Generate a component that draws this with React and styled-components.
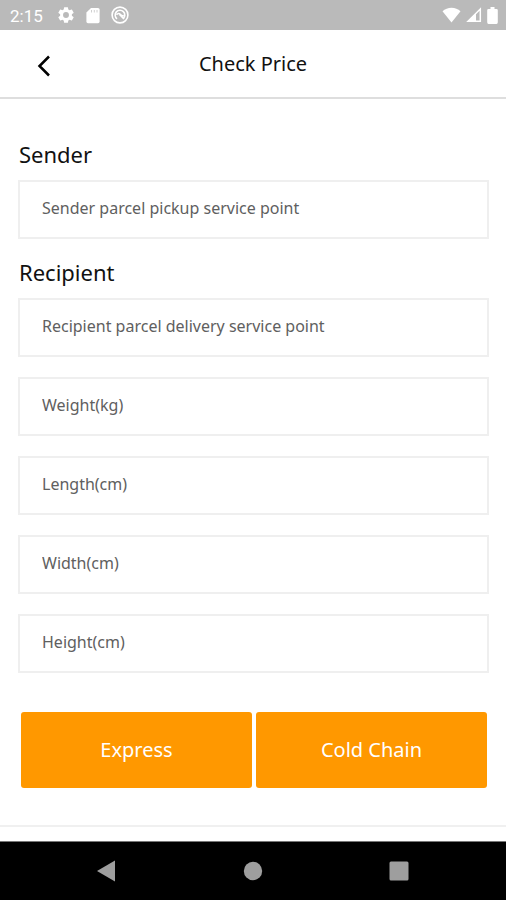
import React from "react";
import styled, { createGlobalStyle } from "styled-components";

const GlobalStyle = createGlobalStyle`
  * { box-sizing: border-box; }
  body { margin: 0; background: #fff; }
  body, button, input { font-family: "Noto Sans", "Open Sans", sans-serif; }
`;

const Screen = styled.div`
  display: flex;
  flex-direction: column;
  min-height: 100vh;
  background: #fff;
  color: #111;
`;

const StatusBar = styled.div`
  display: flex;
  align-items: center;
  justify-content: space-between;
  height: 30px;
  padding: 0 8px 0 10px;
  background: #bababa;
  color: #fff;
  font: 400 17px/30px Roboto, sans-serif;
`;

const StatusGroup = styled.div`
  display: flex;
  align-items: center;
  gap: ${(p) => p.$gap}px;
`;

const Time = styled.span`
  margin-right: 3px;
  padding-top: 2px;
`;

const Header = styled.header`
  display: grid;
  grid-template-columns: 64px 1fr 64px;
  align-items: center;
  height: 69px;
  border-bottom: 2px solid #dedede;
`;

const BackButton = styled.button`
  display: flex;
  justify-content: flex-end;
  padding: 4px 13px 0 0;
  border: 0;
  background: none;
  color: #000;
`;

const Title = styled.h1`
  margin: 0;
  font-size: 20px;
  line-height: 28px;
  font-weight: 400;
  text-align: center;
`;

const Form = styled.form`
  display: flex;
  flex-direction: column;
  flex: 1;
  padding: 42px 17px 37px 18px;
  border-bottom: 2px solid #f0f0f0;
`;

const Field = styled.div`
  display: flex;
  flex-direction: column;
  margin-bottom: 20px;
`;

const Label = styled.label`
  padding-left: 1px;
  margin-bottom: 13px;
  font-size: 22px;
  line-height: 26px;
`;

const Input = styled.input`
  width: 100%;
  height: 59px;
  padding: 0 22px 4px;
  border: 2px solid #efefef;
  border-radius: 0;
  background: #fff;
  color: #333;
  font-size: 16px;
  outline: none;
  &::placeholder { color: #606060; opacity: 1; }
`;

const Actions = styled.div`
  display: flex;
  gap: 4px;
  padding: 19px 2px 0 3px;
`;

const ActionButton = styled.button`
  flex: 1;
  height: 76px;
  padding: 0 0 2px;
  border: 0;
  border-radius: 3px;
  background: #ff9800;
  color: #fff;
  font-size: 20px;
`;

const Gap = styled.div`
  height: 14px;
`;

const NavBar = styled.nav`
  display: flex;
  justify-content: center;
  gap: 118px;
  height: 59px;
  border-top: 1px solid #777;
  background: #000;
`;

const NavButton = styled.button`
  display: flex;
  align-items: center;
  justify-content: center;
  width: 28px;
  padding: 0;
  border: 0;
  background: none;
  color: #9e9e9e;
`;

const GearIcon = () => (
  <svg width="18" height="18" viewBox="1 1 22 22" fill="currentColor" aria-hidden="true">
    <path d="M19.14 12.94c.04-.3.06-.61.06-.94s-.02-.64-.07-.94l2.03-1.58a.5.5 0 0 0 .12-.61l-1.92-3.32a.5.5 0 0 0-.59-.22l-2.39.96a7 7 0 0 0-1.62-.94l-.36-2.54a.48.48 0 0 0-.48-.41h-3.84a.48.48 0 0 0-.47.41l-.36 2.54c-.59.24-1.13.57-1.62.94l-2.39-.96a.48.48 0 0 0-.59.22L2.74 8.87a.48.48 0 0 0 .12.61l2.03 1.58a6 6 0 0 0 0 1.88l-2.03 1.58a.5.5 0 0 0-.12.61l1.92 3.32c.12.22.37.29.59.22l2.39-.96c.5.38 1.03.7 1.62.94l.36 2.54c.05.24.24.41.48.41h3.84c.24 0 .44-.17.47-.41l.36-2.54a7 7 0 0 0 1.62-.94l2.39.96c.22.08.47 0 .59-.22l1.92-3.32a.48.48 0 0 0-.12-.61zM12 15.6a3.6 3.6 0 1 1 0-7.2 3.6 3.6 0 0 1 0 7.2z" />
  </svg>
);

const CardIcon = () => (
  <svg width="14" height="17" viewBox="0 0 14 17" aria-hidden="true">
    <path d="M5 1h7a1.6 1.6 0 0 1 1.6 1.6v12A1.6 1.6 0 0 1 12 16.200H2A1.600 1.600 0 0 1 .4 14.600V5.600z" fill="currentColor" />
    <path d="M5.500 3v2.500M8.300 3v2.500M11 3v2.500" stroke="#d0d0d0" strokeWidth="1" />
  </svg>
);

const CircleIcon = () => (
  <svg width="18" height="18" viewBox="0 0 18 18" fill="none" stroke="currentColor" aria-hidden="true">
    <circle cx="9" cy="9" r="7.900" strokeWidth="1.600" />
    <path d="M6 12.800a4.800 4.800 0 1 1 6.200-.2" strokeWidth="1.600" />
    <path d="M5.500 8.800c1.500-1.800 2.800-1.500 4-.3s2 1.700 3.300 1M8.500 8.500l4.500 4.500" strokeWidth="1.600" />
  </svg>
);

const WifiIcon = () => (
  <svg width="19" height="16" viewBox="0 0 19 16" fill="currentColor" aria-hidden="true">
    <path d="M9.500 15.500.5 4.300C3 2 6 .8 9.500.8s6.500 1.200 9 3.500z" />
  </svg>
);

const SignalIcon = () => (
  <svg width="16" height="16" viewBox="0 0 16 16" aria-hidden="true">
    <path d="M14.300 2v12.300H2z" fill="none" stroke="currentColor" strokeWidth="1.500" />
    <path d="M10 6v9H1z" fill="currentColor" />
  </svg>
);

const BatteryIcon = () => (
  <svg width="11" height="17" viewBox="0 0 11 17" fill="currentColor" aria-hidden="true">
    <path d="M3.500 0h4v2h2q1.300 0 1.300 1.300v12Q10.800 17 9.500 17h-8Q.2 17 .2 15.300v-12Q.2 2 1.500 2h2z" />
  </svg>
);

const FIELDS = [
  { id: "sender", label: "Sender", hint: "Sender parcel pickup service point" },
  { id: "recipient", label: "Recipient", hint: "Recipient parcel delivery service point" },
  { id: "weight", hint: "Weight(kg)" },
  { id: "length", hint: "Length(cm)" },
  { id: "width", hint: "Width(cm)" },
  { id: "height", hint: "Height(cm)" },
];

export default function App() {
  return (
    <Screen>
      <GlobalStyle />
      <StatusBar>
        <StatusGroup $gap={11}>
          <Time>2:15</Time>
          <GearIcon />
          <CardIcon />
          <CircleIcon />
        </StatusGroup>
        <StatusGroup $gap={5}>
          <WifiIcon />
          <SignalIcon />
          <BatteryIcon />
        </StatusGroup>
      </StatusBar>
      <Header>
        <BackButton type="button" aria-label="Back">
          <svg width="14" height="22" viewBox="0 0 14 22" fill="none" stroke="currentColor" strokeWidth="2.500" aria-hidden="true">
            <path d="M12 1.500 2.500 11l9.500 9.500" />
          </svg>
        </BackButton>
        <Title>Check Price</Title>
      </Header>
      <Form onSubmit={(e) => e.preventDefault()}>
        {FIELDS.map((f) => (
          <Field key={f.id}>
            {f.label && <Label htmlFor={f.id}>{f.label}</Label>}
            <Input id={f.id} placeholder={f.hint} aria-label={f.label ? undefined : f.hint} />
          </Field>
        ))}
        <Actions>
          <ActionButton type="button">Express</ActionButton>
          <ActionButton type="button">Cold Chain</ActionButton>
        </Actions>
      </Form>
      <Gap />
      <NavBar>
        <NavButton type="button" aria-label="Navigate back">
          <svg width="20" height="22" viewBox="0 0 20 22" fill="currentColor" aria-hidden="true">
            <path d="M18 .5v21L0 11z" />
          </svg>
        </NavButton>
        <NavButton type="button" aria-label="Home">
          <svg width="20" height="20" viewBox="0 0 20 20" fill="currentColor" aria-hidden="true">
            <circle cx="10" cy="10" r="9.200" />
          </svg>
        </NavButton>
        <NavButton type="button" aria-label="Recent apps">
          <svg width="20" height="20" viewBox="0 0 20 20" fill="currentColor" aria-hidden="true">
            <rect x="0.500" y="0.500" width="19" height="19" rx="1.500" />
          </svg>
        </NavButton>
      </NavBar>
    </Screen>
  );
}
